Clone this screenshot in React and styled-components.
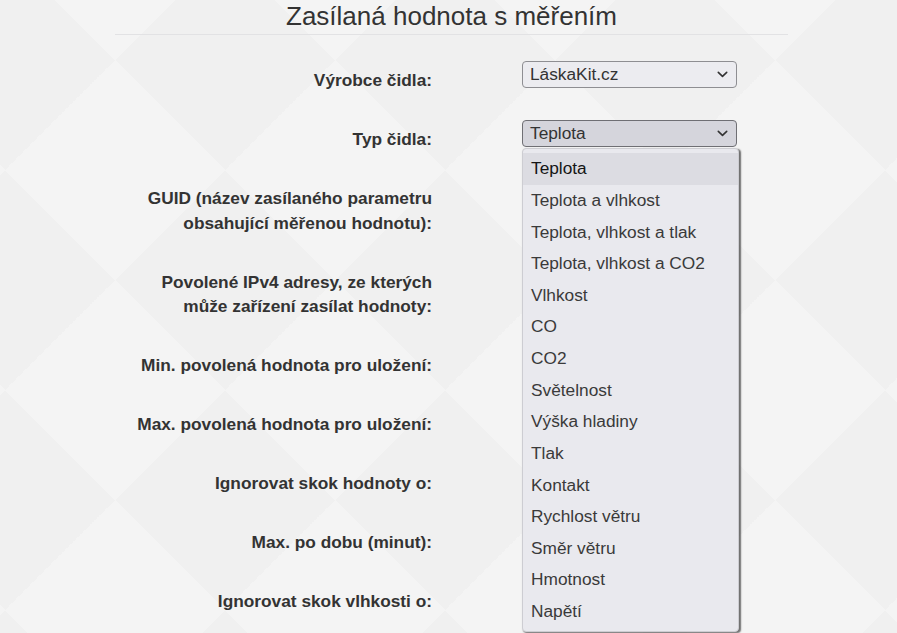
import React from "react";
import styled, { createGlobalStyle } from "styled-components";

const GlobalStyle = createGlobalStyle`
  html, body {
    margin: 0;
    padding: 0;
    height: 100%;
    overflow: hidden;
  }
  body {
    font-family: "Liberation Sans", Arial, sans-serif;
    color: #333;
    /* soft rotated-checker diamond backdrop */
    background-color: #f4f4f4;
    background-image:
      linear-gradient(135deg, #f0f0f0 25%, transparent 25%),
      linear-gradient(225deg, #f0f0f0 25%, transparent 25%),
      linear-gradient(45deg, #f0f0f0 25%, transparent 25%),
      linear-gradient(315deg, #f0f0f0 25%, transparent 25%);
    background-position: 5px 60px;
    background-size: 220px 220px;
  }
`;

const Page = styled.div`
  width: 673px;
  margin-left: 115px;
`;

const Title = styled.h2`
  margin: 0;
  padding: 2px 0 4px;
  font-size: 26px;
  font-weight: 400;
  line-height: 28px;
  text-align: center;
  color: #333;
  border-bottom: 1px solid #e2e2e4;
`;

const Form = styled.form`
  padding-top: 26px;
`;

const Row = styled.div`
  display: grid;
  grid-template-columns: 317px 215px;
  column-gap: 90px;
  margin-bottom: 27.3px;
`;

const Label = styled.label`
  padding-top: 7px;
  font-size: 17.3px;
  font-weight: 700;
  line-height: 24.7px;
  text-align: right;
  color: #333;
`;

const Field = styled.div`
  position: relative;
`;

const SelectBox = styled.div`
  display: flex;
  align-items: center;
  justify-content: space-between;
  box-sizing: border-box;
  height: 27px;
  padding: 0 8px 0 7px;
  border: 1px solid ${(p) => (p.$open ? "#6f6f74" : "#8e8e92")};
  border-radius: 4px;
  background: ${(p) => (p.$open ? "#d5d5dc" : "#ececf0")};
  font-size: 17.3px;
  line-height: 25px;
  color: #333;
`;

const TextInput = styled.div`
  box-sizing: border-box;
  height: 27px;
  border: 1px solid #c4c4c8;
  border-radius: 4px;
  background: #fff;
`;

const Dropdown = styled.ul`
  position: absolute;
  top: 28px;
  left: 0;
  z-index: 5;
  box-sizing: border-box;
  width: 217px;
  margin: 0;
  padding: 4px 0 4px;
  list-style: none;
  background: #e9e9ee;
  border: 1px solid #cdcdd2;
  border-radius: 4px;
  box-shadow: 1.5px 1px 1.5px rgba(0, 0, 0, 0.55);
`;

const Option = styled.li`
  box-sizing: border-box;
  height: 31.64px;
  padding-left: 8px;
  display: flex;
  align-items: center;
  font-size: 17.3px;
  color: ${(p) => (p.$active ? "#151515" : "#3a3a3a")};
  background: ${(p) => (p.$active ? "#dcdce2" : "transparent")};
`;

const Chevron = () => (
  <svg width="11" height="7" viewBox="0 0 11 7" aria-hidden="true">
    <path
      d="M1.3 1.4 L5.5 5.4 L9.7 1.4"
      fill="none"
      stroke="#333"
      strokeWidth="1.6"
      strokeLinecap="round"
      strokeLinejoin="round"
    />
  </svg>
);

const sensorTypes = [
  "Teplota",
  "Teplota a vlhkost",
  "Teplota, vlhkost a tlak",
  "Teplota, vlhkost a CO2",
  "Vlhkost",
  "CO",
  "CO2",
  "Světelnost",
  "Výška hladiny",
  "Tlak",
  "Kontakt",
  "Rychlost větru",
  "Směr větru",
  "Hmotnost",
  "Napětí",
];

const inputRows = [
  ["GUID (název zasílaného parametru", "obsahující měřenou hodnotu):"],
  ["Povolené IPv4 adresy, ze kterých", "může zařízení zasílat hodnoty:"],
  ["Min. povolená hodnota pro uložení:"],
  ["Max. povolená hodnota pro uložení:"],
  ["Ignorovat skok hodnoty o:"],
  ["Max. po dobu (minut):"],
  ["Ignorovat skok vlhkosti o:"],
];

export default function App() {
  return (
    <>
      <GlobalStyle />
      <Page>
        <Title>Zasílaná hodnota s měřením</Title>
        <Form>
          <Row>
            <Label>Výrobce čidla:</Label>
            <Field>
              <SelectBox>
                <span>LáskaKit.cz</span>
                <Chevron />
              </SelectBox>
            </Field>
          </Row>
          <Row>
            <Label>Typ čidla:</Label>
            <Field>
              <SelectBox $open>
                <span>Teplota</span>
                <Chevron />
              </SelectBox>
              <Dropdown>
                {sensorTypes.map((t, i) => (
                  <Option key={t} $active={i === 0}>
                    {t}
                  </Option>
                ))}
              </Dropdown>
            </Field>
          </Row>
          {inputRows.map((lines) => (
            <Row key={lines[0]}>
              <Label>
                {lines.map((l, i) => (
                  <React.Fragment key={l}>
                    {i > 0 && <br />}
                    {l}
                  </React.Fragment>
                ))}
              </Label>
              <Field>
                <TextInput />
              </Field>
            </Row>
          ))}
        </Form>
      </Page>
    </>
  );
}
